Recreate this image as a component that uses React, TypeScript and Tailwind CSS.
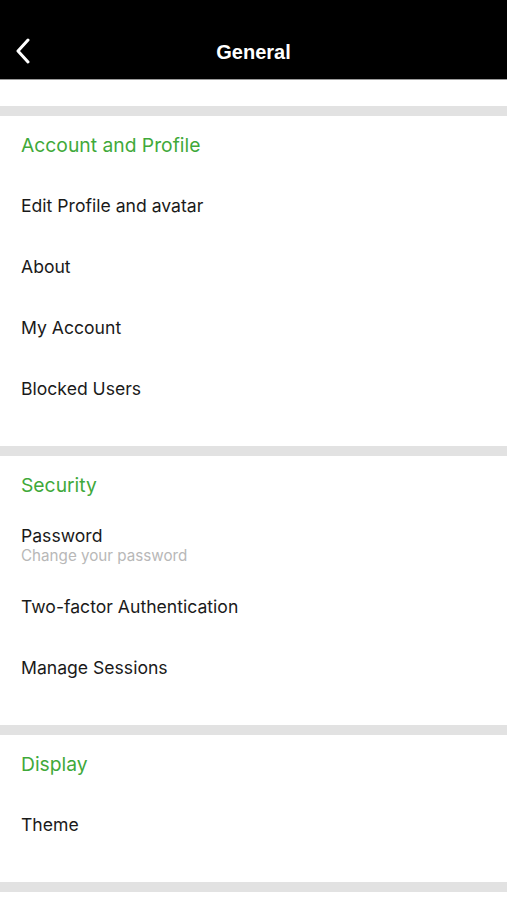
import React from 'react';

interface Item {
  title: string;
  subtitle?: string;
}

interface Section {
  title: string;
  items: Item[];
}

const sections: Section[] = [
  {
    title: 'Account and Profile',
    items: [
      { title: 'Edit Profile and avatar' },
      { title: 'About' },
      { title: 'My Account' },
      { title: 'Blocked Users' },
    ],
  },
  {
    title: 'Security',
    items: [
      { title: 'Password', subtitle: 'Change your password' },
      { title: 'Two-factor Authentication' },
      { title: 'Manage Sessions' },
    ],
  },
  {
    title: 'Display',
    items: [{ title: 'Theme' }],
  },
];

const App: React.FC = () => {
  return (
    <div className="w-[507px] min-h-[900px] bg-white font-['Inter',sans-serif]">
      <div className="h-[79px] bg-black relative">
        <button className="absolute left-[14px] top-[38px] text-white">
          <svg width="20" height="26" viewBox="0 0 20 26" fill="none">
            <path d="M14 2 L4 13 L14 24" stroke="white" strokeWidth="3" strokeLinecap="round" strokeLinejoin="round" />
          </svg>
        </button>
        <h1 className="pt-[40px] text-center text-white text-[20px] leading-[24px] font-semibold font-['Liberation_Sans',sans-serif]">
          General
        </h1>
      </div>
      <div className="h-px bg-[#9a9a9a]" />
      <div className="h-[26px]" />

      {sections.map(section => (
        <div key={section.title}>
          <div className="h-[10px] bg-[#e2e2e2]" />
          <div className="pb-[28px]">
            <div className="h-[58px] flex items-center px-[21px] pt-[1px]">
              <span className="text-[19.3px] text-[#3fa93a]">{section.title}</span>
            </div>
            {section.items.map(item => (
              <div key={item.title} className="h-[61px] flex flex-col justify-center px-[21px] pt-[1px]">
                <span className="text-[17.6px] text-[#1a1a1a] leading-[21px]">{item.title}</span>
                {item.subtitle && (
                  <span className="text-[15.2px] text-[#b8b8b8] leading-[19px]">{item.subtitle}</span>
                )}
              </div>
            ))}
          </div>
        </div>
      ))}
      <div className="h-[10px] bg-[#e2e2e2]" />
    </div>
  );
};

export default App;
